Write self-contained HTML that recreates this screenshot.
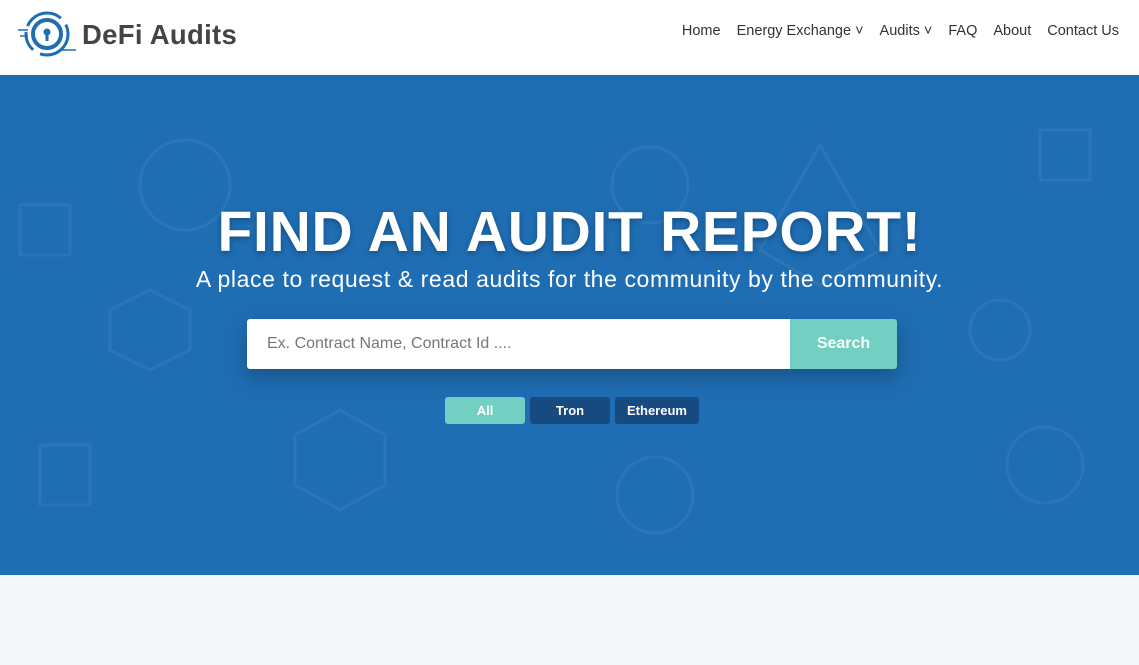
<!DOCTYPE html>
<html><head><meta charset="utf-8"><style>
*{margin:0;padding:0;box-sizing:border-box}
body{width:1139px;height:665px;overflow:hidden;font-family:"Liberation Sans",sans-serif;background:#f4f7fa}
.hdr{height:75px;background:#fff;position:relative}
.logo{position:absolute;left:16px;top:10px;display:flex;align-items:center}
.logo span{font-weight:bold;font-size:27.5px;color:#444;margin-left:4px;letter-spacing:0.3px}
nav{position:absolute;right:20px;top:23px;display:flex;gap:16px;font-size:14.5px;color:#333}
nav a{color:#333;text-decoration:none}
.hero{position:absolute;top:75px;left:0;width:1139px;height:500px;background:#1f6db3;overflow:hidden}
h1{position:absolute;top:124px;width:100%;text-align:center;color:#fff;font-size:57px;font-weight:900;letter-spacing:0.7px;text-shadow:0 2px 6px rgba(0,0,0,.3)}
.sub{position:absolute;top:191px;width:100%;text-align:center;color:#fff;font-size:23px;letter-spacing:0.6px}
.search{position:absolute;left:247px;top:244px;width:650px;height:50px;display:flex;box-shadow:0 8px 20px rgba(0,0,0,.25)}
.search .in{flex:1;background:#fff;border-radius:3px 0 0 3px;color:#777;font-size:16px;padding:16px 20px}
.search .bt{width:107px;background:#74cfc3;color:#f2fffd;font-weight:bold;font-size:16px;text-align:center;line-height:50px;border-radius:0 3px 3px 0}
.tabs{position:absolute;top:322px;left:445px;display:flex;gap:5px}
.tabs div{height:27px;line-height:27px;text-align:center;color:#fff;font-weight:bold;font-size:13px;border-radius:3px}
</style></head><body>
<div class="hdr">
<div class="logo">
<svg width="62" height="50" viewBox="0 0 62 50"><circle cx="31" cy="24" r="21" fill="none" stroke="#1f6db3" stroke-width="3" stroke-dasharray="40 8 20 6"/><circle cx="31" cy="24" r="14" fill="none" stroke="#1f6db3" stroke-width="4"/><circle cx="31" cy="22" r="3.5" fill="#1f6db3"/><rect x="29.5" y="22" width="3" height="9" fill="#1f6db3"/><line x1="2" y1="20" x2="12" y2="20" stroke="#1f6db3" stroke-width="1.5"/><line x1="4" y1="26" x2="12" y2="26" stroke="#1f6db3" stroke-width="1.5"/><line x1="44" y1="40" x2="60" y2="40" stroke="#1f6db3" stroke-width="1.5"/></svg>
<span>DeFi Audits</span></div>
<nav><a>Home</a><a>Energy Exchange ˅</a><a>Audits ˅</a><a>FAQ</a><a>About</a><a>Contact Us</a></nav>
</div>
<div class="hero">
<svg width="1139" height="500" style="position:absolute;left:0;top:0" fill="none" stroke="rgba(255,255,255,0.06)" stroke-width="3">
<circle cx="185" cy="110" r="45"/><circle cx="1045" cy="390" r="38"/><circle cx="655" cy="420" r="38"/><circle cx="650" cy="110" r="38"/>
<polygon points="295,360 340,335 385,360 385,410 340,435 295,410"/><polygon points="110,235 150,215 190,235 190,275 150,295 110,275"/>
<rect x="1040" y="55" width="50" height="50"/><rect x="40" y="370" width="50" height="60"/><rect x="20" y="130" width="50" height="50"/>
<polygon points="820,70 880,175 820,210 760,175"/><circle cx="1000" cy="255" r="30"/>
</svg>
<h1>FIND AN AUDIT REPORT!</h1>
<div class="sub">A place to request &amp; read audits for the community by the community.</div>
<div class="search"><div class="in">Ex. Contract Name, Contract Id ....</div><div class="bt">Search</div></div>
<div class="tabs"><div style="width:80px;background:#74cfc3">All</div><div style="width:80px;background:#174a80">Tron</div><div style="width:84px;background:#174a80">Ethereum</div></div>
</div>
</body></html>
